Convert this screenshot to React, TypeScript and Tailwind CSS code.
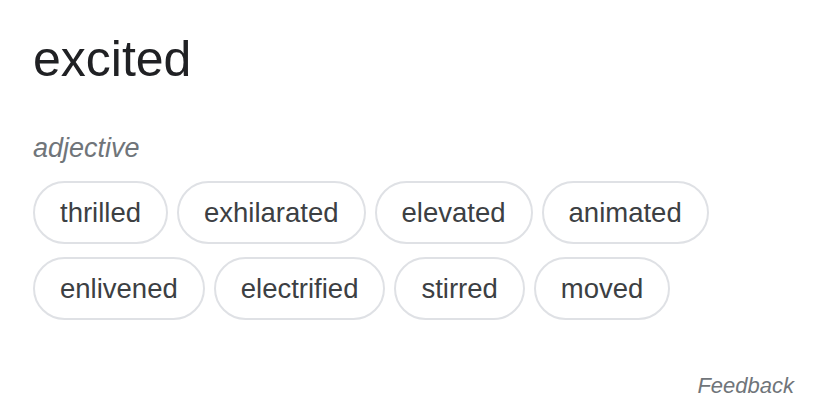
import React from "react";

const rows: string[][] = [
  ["thrilled", "exhilarated", "elevated", "animated"],
  ["enlivened", "electrified", "stirred", "moved"]
];

const Chip: React.FC<{ label: string }> = ({ label }) => {
  return (
    <span className="flex h-[63px] items-center rounded-full border-2 border-[#dfe1e5] px-[25px] text-[27.5px] text-[#3c4043]">
      {label}
    </span>
  );
};

export default function App() {
  return (
    <div
      className="flex h-[416px] w-[827px] flex-col bg-white px-[33px]"
      style={{ fontFamily: '"Liberation Sans", Arial, sans-serif' }}
    >
      {/* 단어 */}
      <h1 className="mt-[30px] text-[50px] leading-[58px] text-[#202124]">
        excited
      </h1>
      {/* 품사 */}
      <p className="mt-[44px] text-[27px] leading-[32px] italic text-[#70757a]">
        adjective
      </p>
      {/* 유의어 칩 */}
      <div className="mt-[17px] flex flex-col gap-[13px]">
        {rows.map((row, i) => (
          <div key={i} className="flex gap-[9px]">
            {row.map((w) => (
              <Chip key={w} label={w} />
            ))}
          </div>
        ))}
      </div>
      <div className="mt-auto mb-[14px] flex justify-end">
        <span className="text-[22px] italic text-[#70757a]">Feedback</span>
      </div>
    </div>
  );
}
